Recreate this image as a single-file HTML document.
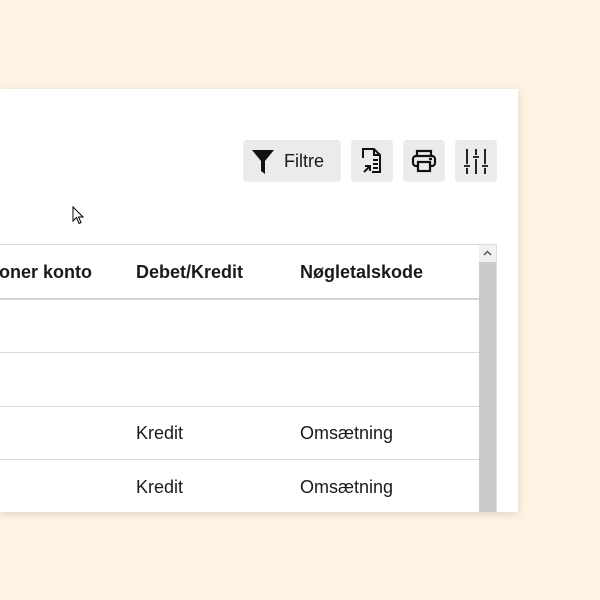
<!DOCTYPE html>
<html><head><style>
body{margin:0;width:600px;height:600px;background:#fdf3e3;position:relative;overflow:hidden;font-family:"Liberation Sans",sans-serif;color:#1a1a1a}
.card{position:absolute;left:0;top:89px;width:518px;height:423px;background:#fff;box-shadow:0 2px 8px rgba(0,0,0,.12);overflow:hidden}
.btn{position:absolute;top:51px;height:42px;background:#ebebeb;border-radius:4px}
.t{position:absolute;font-size:18px}
.b{font-weight:bold}
.line{position:absolute;left:0;width:479px;height:1px;background:#dcdcdc}
</style></head><body>
<div class="card">
 <div class="btn" style="left:243px;width:98px">
  <svg style="position:absolute;left:9px;top:10px" width="22" height="24" viewBox="0 0 22 24"><path d="M0 0H22L13 11V24L9 21V11Z" fill="#111"/></svg>
  <span style="position:absolute;left:41px;top:11px;font-size:18px">Filtre</span>
 </div>
 <div class="btn" style="left:351px;width:42px">
  <svg style="position:absolute;left:10px;top:8px" width="22" height="26" viewBox="0 0 22 26" fill="none" stroke="#111" stroke-width="2"><path d="M2 10V1H13L19 7V24H11"/><path d="M13 1V7H19"/><path d="M3 24L9 18M4 18H9V23"/><path d="M12 12H17M12 16H17M12 20H17"/></svg>
 </div>
 <div class="btn" style="left:403px;width:42px">
  <svg style="position:absolute;left:8px;top:9px" width="26" height="24" viewBox="0 0 26 24" fill="none" stroke="#111" stroke-width="2.2"><path d="M6 7V2H20V7"/><rect x="2" y="7" width="22" height="10" rx="3"/><rect x="7" y="13" width="12" height="9" fill="#ebebeb"/><path d="M18 10H21"/></svg>
 </div>
 <div class="btn" style="left:455px;width:42px">
  <svg style="position:absolute;left:9px;top:8px" width="24" height="26" viewBox="0 0 24 26" fill="none" stroke="#111" stroke-width="1.8"><path d="M3 1V16M3 20V26M0 18H6M12 1V7M12 11V26M9 9H15M21 1V16M21 20V26M18 18H24"/></svg>
 </div>
 <svg style="position:absolute;left:72px;top:117px" width="12" height="19" viewBox="0 0 12 19"><path d="M1 1V15L4.5 11.5L7 17.5L9 16.5L6.5 11H11Z" fill="#fff" stroke="#000" stroke-width="1"/></svg>
 <div style="position:absolute;left:0;top:155px;width:497px;height:1px;background:#dcdcdc"></div>
 <div style="position:absolute;left:496px;top:155px;width:1px;height:270px;background:#dcdcdc"></div>
 <div style="position:absolute;left:479px;top:156px;width:17px;height:17px;background:#f1f1f1"><svg width="17" height="17"><path d="M5 10L8.5 6.5L12 10" fill="none" stroke="#555" stroke-width="1.5"/></svg></div>
 <div style="position:absolute;left:479px;top:173px;width:17px;height:260px;background:#cbcbcb"></div>
 <div class="t b" style="left:-1px;top:173px">oner konto</div>
 <div class="t b" style="left:136px;top:173px">Debet/Kredit</div>
 <div class="t b" style="left:300px;top:173px">Nøgletalskode</div>
 <div class="line" style="top:209px;height:2px;background:#d4d4d4"></div>
 <div class="line" style="top:263px"></div>
 <div class="line" style="top:317px"></div>
 <div class="line" style="top:370px"></div>
 <div class="t" style="left:136px;top:334px">Kredit</div>
 <div class="t" style="left:300px;top:334px">Omsætning</div>
 <div class="t" style="left:136px;top:388px">Kredit</div>
 <div class="t" style="left:300px;top:388px">Omsætning</div>
</div>
</body></html>
